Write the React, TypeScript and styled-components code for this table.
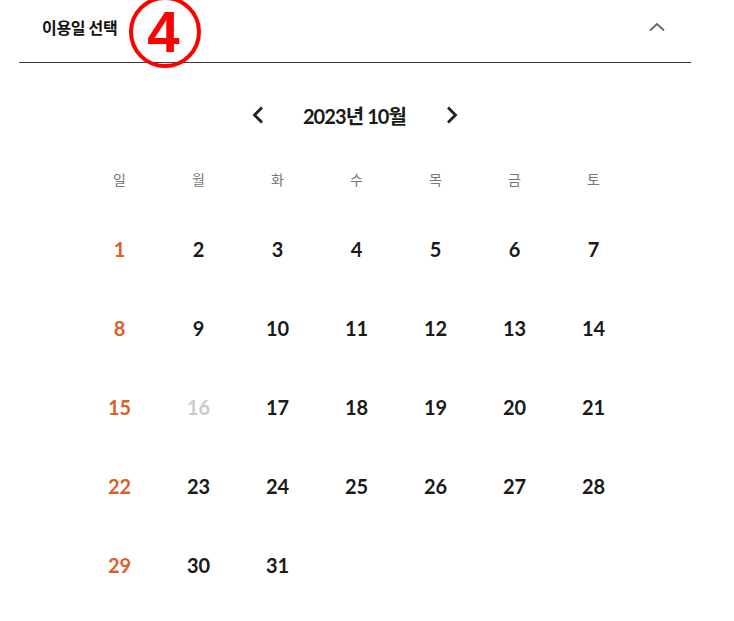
import React from 'react';
import styled, { createGlobalStyle } from 'styled-components';

const GlobalStyle = createGlobalStyle`
  body {
    margin: 0;
    background: #ffffff;
    font-family: Lato, "Noto Sans CJK KR", sans-serif;
  }
`;

const Wrapper = styled.div`
  width: 672px;
  margin-left: 19px;
  position: relative;
`;

const Header = styled.div`
  height: 63px;
  border-bottom: 1px solid #3a3a3a;
  display: flex;
  align-items: center;
  justify-content: space-between;
  padding: 0 26px 9px 23px;
  box-sizing: border-box;
`;

const Title = styled.h2`
  margin: 0;
  font-family: "Noto Sans CJK KR", sans-serif;
  font-size: 16px;
  font-weight: 700;
  color: #111;
  letter-spacing: -0.3px;
`;

const Badge = styled.div`
  position: absolute;
  left: 110px;
  top: -4px;
  width: 61px;
  height: 64px;
  padding-right: 3px;
  border: 4px solid #ff0000;
  border-radius: 50%;
  display: flex;
  align-items: center;
  justify-content: center;
  color: #ff0000;
  font-family: "Liberation Sans", Arial, sans-serif;
  font-weight: 700;
  font-size: 58px;
  line-height: 1;
`;

const IconButton = styled.button`
  background: none;
  border: none;
  padding: 0;
  display: flex;
  align-items: center;
  cursor: pointer;
`;

const Calendar = styled.div`
  width: 553px;
  margin-left: 61px;
`;

const MonthNav = styled.div`
  margin-top: 32px;
  height: 40px;
  padding-right: 4px;
  display: flex;
  align-items: center;
  justify-content: center;
  gap: 37px;
`;

const MonthTitle = styled.span`
  font-family: Lato, "Noto Sans CJK KR", sans-serif;
  font-size: 20px;
  font-weight: 700;
  color: #1a1a1a;
  letter-spacing: -0.9px;
  min-width: 106px;
  text-align: center;
`;

const Grid = styled.div`
  display: grid;
  grid-template-columns: repeat(7, 79px);
`;

const WeekRow = styled(Grid)`
  margin-top: 29px;
  height: 30px;
  margin-bottom: 15px;
`;

const WeekDay = styled.div`
  display: flex;
  align-items: center;
  justify-content: center;
  font-family: "Noto Sans CJK KR", sans-serif;
  font-size: 14px;
  color: #777;
`;

const Day = styled.div<{ $tone: 'normal' | 'sunday' | 'disabled' }>`
  height: 79px;
  display: flex;
  align-items: center;
  justify-content: center;
  font-family: Lato, sans-serif;
  font-size: 20px;
  font-weight: 700;
  color: ${p => (p.$tone === 'sunday' ? '#dc5f2a' : p.$tone === 'disabled' ? '#cccccc' : '#1a1a1a')};
`;

const weekDays = ['일', '월', '화', '수', '목', '금', '토'];

export default function App() {
  const days = Array.from({ length: 31 }, (_, i) => i + 1);

  return (
    <Wrapper>
      <GlobalStyle />
      <Header>
        <Title>이용일 선택</Title>
        <IconButton aria-label="접기">
          <svg width="16" height="10" viewBox="0 0 16 10">
            <path d="M1 8.5 L8 2 L15 8.5" fill="none" stroke="#666" strokeWidth="1.8" />
          </svg>
        </IconButton>
      </Header>
      <Badge>4</Badge>
      <Calendar>
        <MonthNav>
          <IconButton aria-label="이전 달">
            <svg width="14" height="20" viewBox="0 0 14 20">
              <path d="M11 2.5 L3.5 10 L11 17.5" fill="none" stroke="#222" strokeWidth="2.8" />
            </svg>
          </IconButton>
          <MonthTitle>2023년 10월</MonthTitle>
          <IconButton aria-label="다음 달">
            <svg width="14" height="20" viewBox="0 0 14 20">
              <path d="M3 2.5 L10.5 10 L3 17.5" fill="none" stroke="#222" strokeWidth="2.8" />
            </svg>
          </IconButton>
        </MonthNav>
        <WeekRow>
          {weekDays.map(d => (
            <WeekDay key={d}>{d}</WeekDay>
          ))}
        </WeekRow>
        <Grid>
          {days.map((d, i) => (
            <Day key={d} $tone={i % 7 === 0 ? 'sunday' : d === 16 ? 'disabled' : 'normal'}>
              {d}
            </Day>
          ))}
        </Grid>
      </Calendar>
    </Wrapper>
  );
}
